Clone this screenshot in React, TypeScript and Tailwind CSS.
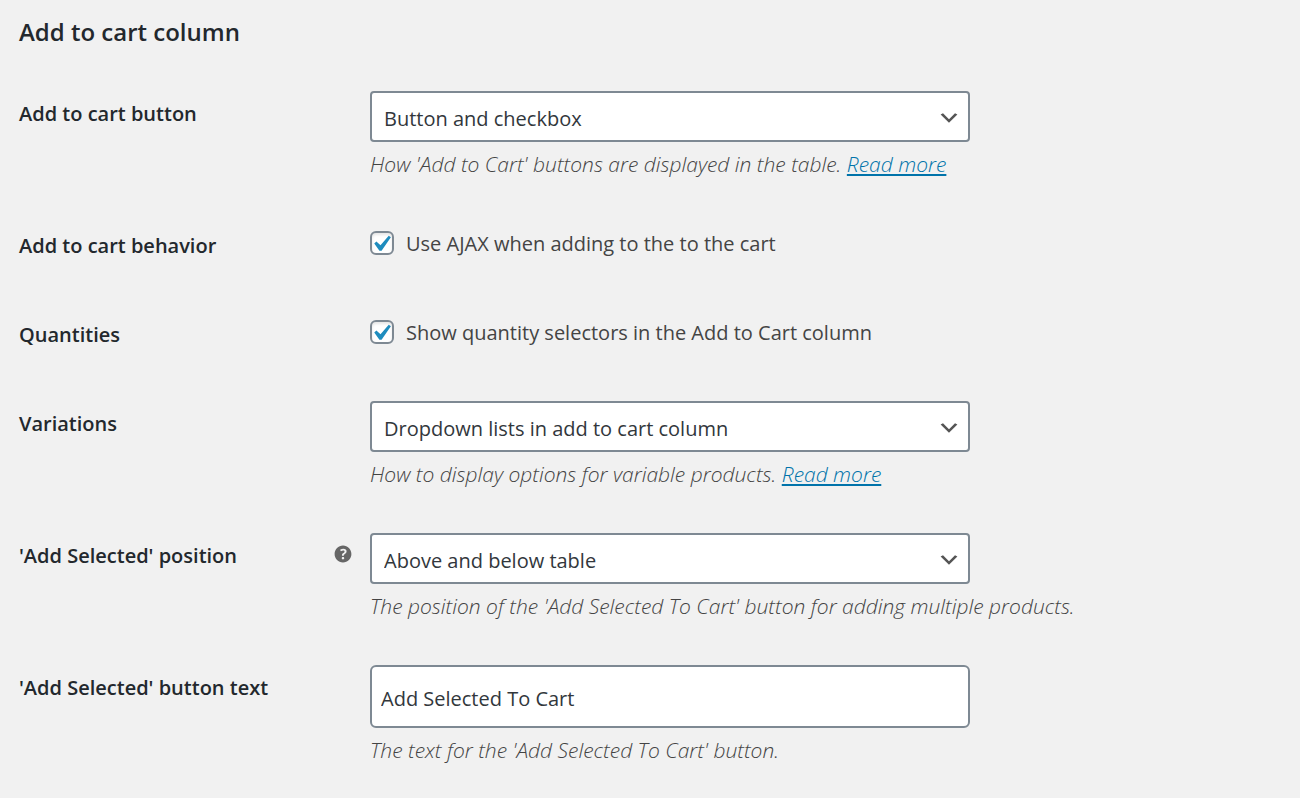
import type { ReactNode } from 'react';

const inputText = 'text-xl text-[#32373c]';

function HelpIcon() {
  return (
    <svg viewBox="0 0 20 20" className="size-6 fill-[#666]" aria-hidden="true">
      <path d="M17 10c0-3.87-3.14-7-7-7-3.87 0-7 3.13-7 7s3.13 7 7 7c3.86 0 7-3.13 7-7zm-6.3 1.48H9.14v-.43c0-.38.08-.7.24-.98s.46-.57.88-.89c.41-.29.68-.53.81-.71.14-.18.2-.39.2-.62 0-.25-.09-.44-.28-.58-.19-.13-.45-.19-.79-.19-.58 0-1.25.19-2 .57l-.64-1.28c.87-.49 1.8-.74 2.77-.74.81 0 1.45.2 1.92.58.48.39.71.91.71 1.55 0 .43-.09.8-.29 1.11-.19.32-.57.67-1.11 1.06-.38.28-.61.49-.71.63-.1.15-.15.34-.15.57v.35zm-1.47 2.74c-.18-.17-.27-.42-.27-.73 0-.33.08-.58.26-.75s.43-.25.77-.25c.32 0 .57.09.75.26s.27.42.27.74c0 .3-.09.55-.27.72-.18.18-.43.27-.75.27-.33 0-.58-.09-.76-.27z" />
    </svg>
  );
}

type RowProps = {
  label: string;
  htmlFor?: string;
  help?: string;
  children: ReactNode;
};

function Row({ label, htmlFor, help, children }: RowProps) {
  return (
    <div className="grid grid-cols-[351px_1fr] items-start">
      <div className="flex items-start justify-between py-[30px] pr-[15px] text-xl leading-[29px] font-semibold text-[#23282d]">
        {htmlFor ? <label htmlFor={htmlFor}>{label}</label> : <span>{label}</span>}
        {help ? (
          <button type="button" aria-label={help} className="pt-px">
            <HelpIcon />
          </button>
        ) : null}
      </div>
      <div className="pt-[22px]">{children}</div>
    </div>
  );
}

function Description({ children, readMore }: { children: ReactNode; readMore?: boolean }) {
  return (
    <p className="mt-[7px] mb-[22px] text-[21px] leading-[30px] font-light text-[#444] italic">
      {children}
      {readMore ? (
        <>
          {' '}
          <a href="#read-more" className="text-[#0073aa] underline decoration-2 underline-offset-2">
            Read more
          </a>
        </>
      ) : null}
    </p>
  );
}

function SelectField({ id, options }: { id: string; options: string[] }) {
  return (
    <div className="relative w-[600px] max-w-full">
      <select
        id={id}
        className={`${inputText} block h-[51px] w-full appearance-none rounded-[4px] border-2 border-[#7e8993] bg-white pt-1 pr-9 pl-3`}
      >
        {options.map((option) => (
          <option key={option}>{option}</option>
        ))}
      </select>
      <svg
        viewBox="0 0 20 20"
        className="pointer-events-none absolute top-[15px] right-[9px] size-6 fill-[#555]"
        aria-hidden="true"
      >
        <path d="M5 6l5 5 5-5 2 1-7 7-7-7 2-1z" />
      </svg>
    </div>
  );
}

function CheckboxField({ id, children }: { id: string; children: ReactNode }) {
  return (
    <label htmlFor={id} className="flex h-10 items-center gap-3 text-xl text-[#444]">
      <span className="relative size-6">
        <input
          id={id}
          type="checkbox"
          defaultChecked
          className="peer block size-6 appearance-none rounded-[6px] border-2 border-[#7e8993] bg-white shadow-[inset_0_2px_3px_rgba(0,0,0,0.1)]"
        />
        <svg
          viewBox="0 0 20 20"
          className="pointer-events-none invisible absolute -top-[3px] -left-[5px] size-8 max-w-none fill-[#1e8cbe] peer-checked:visible"
          aria-hidden="true"
        >
          <path d="M14.83 4.89l1.34.94-5.81 8.38H9.02L5.78 9.67l1.34-1.25 2.57 2.4z" />
        </svg>
      </span>
      <span className="pt-0.5">{children}</span>
    </label>
  );
}

export default function App() {
  return (
    <main className="min-h-screen bg-[#f1f1f1] px-[19px] pt-3 font-['Open_Sans','Noto_Sans',sans-serif]">
      <h2 className="mb-[17px] text-2xl leading-10 font-semibold text-[#23282d]">Add to cart column</h2>
      <form>
        <Row label="Add to cart button" htmlFor="cart-button">
          <SelectField id="cart-button" options={['Button and checkbox', 'Button', 'Checkbox']} />
          <Description readMore>How 'Add to Cart' buttons are displayed in the table.</Description>
        </Row>
        <Row label="Add to cart behavior">
          <CheckboxField id="ajax-cart">Use AJAX when adding to the to the cart</CheckboxField>
        </Row>
        <Row label="Quantities">
          <CheckboxField id="quantities">Show quantity selectors in the Add to Cart column</CheckboxField>
        </Row>
        <Row label="Variations" htmlFor="variations">
          <SelectField id="variations" options={['Dropdown lists in add to cart column', 'Link to product page']} />
          <Description readMore>How to display options for variable products.</Description>
        </Row>
        <Row label="'Add Selected' position" htmlFor="selected-position" help="Help">
          <SelectField id="selected-position" options={['Above and below table', 'Above table', 'Below table']} />
          <Description>The position of the 'Add Selected To Cart' button for adding multiple products.</Description>
        </Row>
        <Row label="'Add Selected' button text" htmlFor="selected-text">
          <input
            id="selected-text"
            type="text"
            defaultValue="Add Selected To Cart"
            className={`${inputText} block h-[63px] w-[600px] max-w-full rounded-[6px] border-2 border-[#7e8993] bg-white px-[9px] pt-1`}
          />
          <Description>The text for the 'Add Selected To Cart' button.</Description>
        </Row>
      </form>
    </main>
  );
}
